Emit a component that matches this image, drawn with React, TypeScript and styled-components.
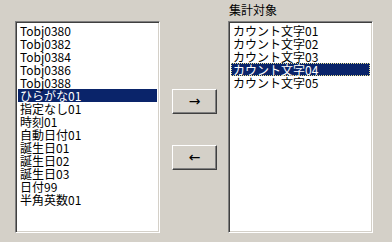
import React from "react";
import styled, { createGlobalStyle } from "styled-components";

const colors = {
  face: "#d4d0c8",
  shadow: "#808080",
  dark: "#404040",
  light: "#ffffff",
  highlight: "#0a246a",
};

const GlobalStyle = createGlobalStyle`
  html, body {
    margin: 0;
    padding: 0;
    background: ${colors.face};
  }
  body {
    width: 392px;
    height: 242px;
    overflow: hidden;
    font-family: "Noto Sans CJK JP", "DejaVu Sans", sans-serif;
    font-size: 12px;
    color: #000;
  }
`;

const sourceItems = [
  "Tobj0380",
  "Tobj0382",
  "Tobj0384",
  "Tobj0386",
  "Tobj0388",
  "ひらがな01",
  "指定なし01",
  "時刻01",
  "自動日付01",
  "誕生日01",
  "誕生日02",
  "誕生日03",
  "日付99",
  "半角英数01",
];

const targetItems = [
  "カウント文字01",
  "カウント文字02",
  "カウント文字03",
  "カウント文字04",
  "カウント文字05",
];

const App: React.FC = () => {
  return (
    <>
      <GlobalStyle />
      <Dialog>
        <Column>
          <Label />
          <ListBox>
            {sourceItems.map((item, i) => (
              <Item key={item} $selected={i === 5}>
                {item}
              </Item>
            ))}
          </ListBox>
        </Column>
        <Buttons>
          <ArrowButton>→</ArrowButton>
          <ArrowButton>←</ArrowButton>
        </Buttons>
        <Column>
          <Label>集計対象</Label>
          <ListBox>
            {targetItems.map((item, i) => (
              <Item key={item} $selected={i === 3} $focused={i === 3}>
                {item}
              </Item>
            ))}
          </ListBox>
        </Column>
      </Dialog>
    </>
  );
};

const Dialog = styled.div`
  display: flex;
  align-items: flex-start;
  padding: 0 0 0 15px;
`;

const Column = styled.div`
  display: flex;
  flex-direction: column;
`;

const Label = styled.div`
  height: 21px;
  line-height: 20px;
  padding-left: 1px;
  box-sizing: border-box;
`;

const ListBox = styled.ul`
  list-style: none;
  margin: 0;
  width: 145px;
  height: 212px;
  box-sizing: border-box;
  background: ${colors.light};
  border-top: 1px solid ${colors.shadow};
  border-left: 1px solid ${colors.shadow};
  border-bottom: 1px solid ${colors.light};
  border-right: 1px solid ${colors.light};
  box-shadow: inset 1px 1px 0 ${colors.dark}, inset -1px -1px 0 ${colors.face};
  padding: 2px;
  overflow: hidden;
`;

const Item = styled.li<{ $selected?: boolean; $focused?: boolean }>`
  height: 13px;
  line-height: 13px;
  padding-left: 2px;
  white-space: nowrap;
  box-sizing: border-box;
  background: ${(p) => (p.$selected ? colors.highlight : "transparent")};
  color: ${(p) => (p.$selected ? colors.light : "#000")};
  outline: ${(p) => (p.$focused ? "1px dotted #e8e090" : "none")};
  outline-offset: -1px;
`;

const Buttons = styled.div`
  display: flex;
  flex-direction: column;
  gap: 31px;
  margin: 89px 11px 0 12px;
`;

const ArrowButton = styled.button`
  width: 45px;
  height: 25px;
  padding: 0 0 2px;
  margin: 0;
  background: ${colors.face};
  border-top: 1px solid ${colors.light};
  border-left: 1px solid ${colors.light};
  border-bottom: 1px solid ${colors.dark};
  border-right: 1px solid ${colors.dark};
  box-shadow: inset -1px -1px 0 ${colors.shadow};
  font-family: "DejaVu Sans", sans-serif;
  font-size: 14px;
  line-height: 14px;
  color: #000;
  cursor: pointer;
`;

export default App;
